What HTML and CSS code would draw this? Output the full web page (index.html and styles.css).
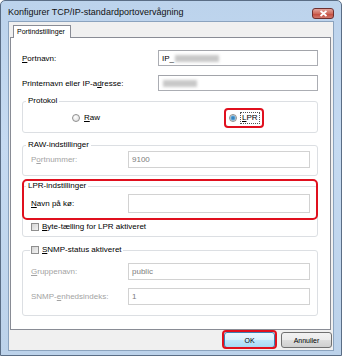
FILE: index.html
```html
<!DOCTYPE html>
<html lang="da">

<head>
    <meta charset="UTF-8">
    <title>Konfigurer TCP/IP-standardportovervågning</title>
    <link rel="stylesheet" href="styles.css">
</head>

<body>
    <div class="window">
        <div class="titlebar">
            <span class="title">Konfigurer TCP/IP-standardportovervågning</span>
            <div class="close">
                <svg width="9" height="7" viewBox="0 0 9 7">
                    <path d="M1.5 1 L7.5 6 M7.5 1 L1.5 6" stroke="#fff" stroke-width="1.8" fill="none"/>
                </svg>
            </div>
        </div>

        <div class="client">
            <div class="tabs">
                <div class="tab">Portindstillinger</div>
            </div>

            <div class="panel">
                <div class="row">
                    <label class="label"><u>P</u>ortnavn:</label>
                    <div class="input">IP_<span class="blur wide"></span></div>
                </div>
                <div class="row second">
                    <label class="label">Printernavn eller IP-a<u>d</u>resse:</label>
                    <div class="input"><span class="blur"></span></div>
                </div>

                <div class="group protocol">
                    <div class="group-title">Protokol</div>
                    <div class="radios">
                        <span class="radio-item"><span class="radio"></span><span><u>R</u>aw</span></span>
                        <span class="radio-item lpr mark">
                            <span class="radio checked"></span><span class="focus"><u>L</u>PR</span>
                        </span>
                    </div>
                </div>

                <div class="group raw">
                    <div class="group-title">RAW-indstillinger</div>
                    <div class="row inner">
                        <label class="label small disabled">P<u>o</u>rtnummer:</label>
                        <div class="input field disabled-value">9100</div>
                    </div>
                </div>

                <div class="group lpr-group">
                    <div class="group-title">LPR-indstillinger</div>
                    <div class="row inner tall">
                        <label class="label small"><u>N</u>avn på kø:</label>
                        <div class="input field"></div>
                    </div>
                    <div class="check-row">
                        <span class="checkbox"></span><span><u>B</u>yte-tælling for LPR aktiveret</span>
                    </div>
                    <div class="mark-box"></div>
                </div>

                <div class="group snmp">
                    <div class="group-title check-title">
                        <span class="checkbox"></span><span><u>S</u>NMP-status aktiveret</span>
                    </div>
                    <div class="row inner first">
                        <label class="label small disabled"><u>G</u>ruppenavn:</label>
                        <div class="input field disabled-value">public</div>
                    </div>
                    <div class="row inner next">
                        <label class="label small disabled">SNMP-<u>e</u>nhedsindeks:</label>
                        <div class="input field disabled-value">1</div>
                    </div>
                </div>
            </div>

            <div class="buttons">
                <button class="btn default mark">OK</button>
                <button class="btn">Annuller</button>
            </div>
        </div>
    </div>
</body>

</html>
```

FILE: styles.css
```css
body {
    margin: 0;
    font-family: 'Liberation Sans', Arial, sans-serif;
    font-size: 8px;
    color: #000;
    background: #fff;
}

.window {
    width: 342px;
    height: 356px;
    box-sizing: border-box;
    border: 1px solid #5a6d85;
    border-radius: 5px 5px 0 0;
    background: linear-gradient(to bottom, #bcd3ec, #c5daf1 40%, #bcd2ea);
    padding: 0 7px 4px 7px;
    display: flex;
    flex-direction: column;
}

.titlebar {
    height: 20px;
    display: flex;
    align-items: center;
    justify-content: space-between;
}

.title {
    font-size: 9px;
    color: #111;
    padding-top: 1px;
}

.close {
    width: 22px;
    height: 11px;
    margin-top: 5px;
    border: 1px solid #6e2f2f;
    border-radius: 3px;
    background: linear-gradient(to bottom, #e4a59e, #cf6a5c 50%, #c2473a 51%, #d0776b);
    display: flex;
    align-items: center;
    justify-content: center;
    box-sizing: border-box;
}

.client {
    flex: 1;
    background: #f0f0f0;
    border: 1px solid #8ba3be;
    display: flex;
    flex-direction: column;
}

.tabs {
    display: flex;
    padding: 3px 0 0 4px;
}

.tab {
    background: #fff;
    border: 1px solid #898c95;
    border-bottom: none;
    height: 12px;
    line-height: 12px;
    padding: 0 5px 0 3px;
    font-size: 7px;
    position: relative;
    margin-bottom: -1px;
    z-index: 1;
}

.panel {
    background: #fff;
    border: 1px solid #898c95;
    margin: 0 2px 0 1px;
    padding: 12px 12px 13px 11px;
}

.row {
    display: flex;
    align-items: center;
}

.row.second {
    margin-top: 9px;
}

.label {
    width: 136px;
    flex: none;
}

.label.small {
    width: 97px;
}

.disabled {
    color: #a3a3a3;
}

.input {
    flex: 1;
    height: 16px;
    box-sizing: border-box;
    border: 1px solid #abadb3;
    border-top-color: #a2a4aa;
    display: flex;
    align-items: center;
    padding-left: 3px;
    background: #fff;
}

.input.field {
    height: 17px;
    border-color: #d2d2d2;
}

.tall .input.field {
    height: 19px;
}

.disabled-value {
    color: #7d7d7d;
}

.blur {
    display: inline-block;
    width: 34px;
    height: 7px;
    background: #c8c8c8;
    filter: blur(1.5px);
    margin-left: 1px;
}

.blur.wide {
    width: 44px;
}

.group {
    border: 1px solid #dcdfe3;
    border-radius: 3px;
    position: relative;
}

.group-title {
    width: fit-content;
    line-height: 12px;
    margin: -7px 0 0 3px;
    padding: 0 2px;
    background: #fff;
}

.protocol {
    margin-top: 10px;
    padding-bottom: 8px;
}

.radios {
    display: flex;
    align-items: center;
    gap: 129px;
    padding-left: 49px;
    margin-top: 5px;
    line-height: 12px;
}

.radio-item {
    display: flex;
    align-items: center;
    gap: 4px;
}

.radio {
    width: 8px;
    height: 8px;
    border-radius: 50%;
    border: 1px solid #8f8f8f;
    box-sizing: border-box;
    background: radial-gradient(circle at 40% 35%, #fff, #d9d9d9);
}

.radio.checked {
    background: radial-gradient(circle, #2a6ea8 0, #57a7dd 2px, #e4e4e4 3px);
}

.focus {
    outline: 1px dotted #555;
    padding: 0 1px;
    line-height: 10px;
}

.mark {
    position: relative;
}

.mark::after {
    content: "";
    position: absolute;
    top: -5px;
    bottom: -5px;
    left: -5px;
    right: -5px;
    border: 2px solid #e0101e;
    border-radius: 4px;
}

.raw {
    margin-top: 12px;
    padding-bottom: 7px;
}

.inner {
    padding: 0 7px 0 8px;
}

.lpr-group {
    margin-top: 10px;
    padding-bottom: 3px;
}

.lpr-group .row {
    margin-top: 2px;
}

.check-row {
    display: flex;
    align-items: center;
    gap: 3px;
    padding-left: 8px;
    margin-top: 8px;
    line-height: 12px;
}

.checkbox {
    width: 8px;
    height: 8px;
    box-sizing: border-box;
    border: 1px solid #8f8f8f;
    background: linear-gradient(135deg, #d4d4d4, #f4f4f4);
    flex: none;
}

.mark-box {
    position: absolute;
    top: -8px;
    left: -1px;
    right: -1px;
    height: 37px;
    border: 2px solid #e0101e;
    border-radius: 5px;
}

.snmp {
    margin-top: 13px;
    padding-bottom: 10px;
}

.check-title {
    display: flex;
    align-items: center;
    gap: 3px;
    margin-left: 7px;
    padding: 0 1px;
}

.snmp .first {
    margin-top: 7px;
}

.snmp .next {
    margin-top: 8px;
}

.buttons {
    display: flex;
    justify-content: flex-end;
    gap: 6px;
    padding: 2px 1px 0 0;
}

.btn {
    font-family: 'Liberation Sans', Arial, sans-serif;
    font-size: 7px;
    height: 16px;
    width: 51px;
    padding: 0;
    border: 1px solid #707070;
    border-radius: 3px;
    background: linear-gradient(to bottom, #f2f2f2, #ebebeb 50%, #dddddd 51%, #cfcfcf);
    color: #000;
}

.btn.default {
    border-color: #3c7fb1;
    background: linear-gradient(to bottom, #eaf6fd, #d9f0fc 50%, #bee6fd 51%, #a7d9f5);
}

.btn.mark::after {
    top: -3px;
    bottom: -2px;
    left: -3px;
    right: -3px;
}
```
